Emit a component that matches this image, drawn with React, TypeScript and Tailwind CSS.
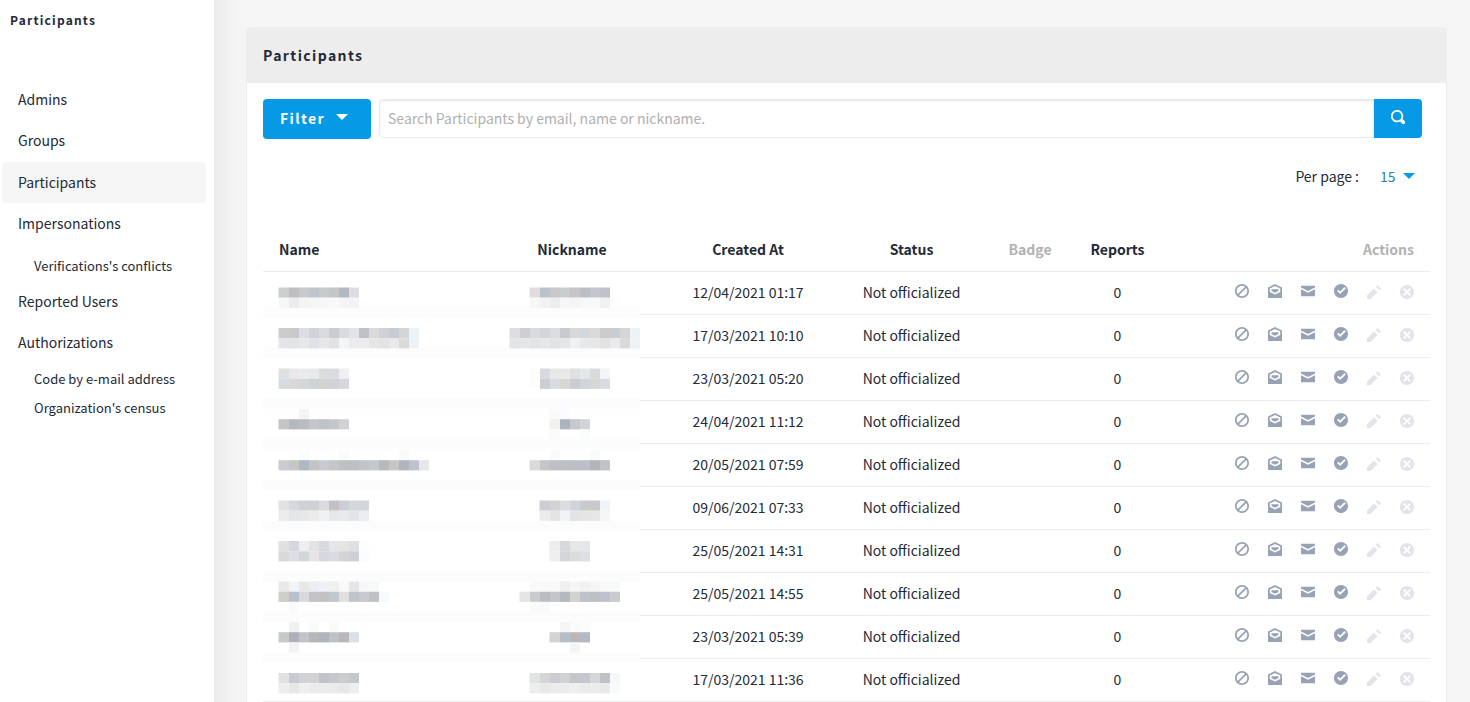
import React from "react";

const icons = {
  ban: "M4 0c-2.2 0-4 1.8-4 4s1.8 4 4 4 4-1.8 4-4-1.8-4-4-4zm0 1c.66 0 1.26.21 1.75.56l-4.19 4.19c-.35-.49-.56-1.09-.56-1.75 0-1.66 1.34-3 3-3zm2.44 1.25c.35.49.56 1.09.56 1.75 0 1.66-1.34 3-3 3-.66 0-1.26-.21-1.75-.56l4.19-4.19z",
  open: "M4 0l-4 2v6h8v-6l-4-2zm0 1.13l3 1.5v1.88l-3 1.5-3-1.5v-1.88l3-1.5zm-2 1.88v1l2 1 2-1v-1h-4z",
  envelope: "M0 1v1l4 2 4-2v-1h-8zm0 2v4h8v-4l-4 2-4-2z",
  check: "M4 0c-2.2 0-4 1.8-4 4s1.8 4 4 4 4-1.8 4-4-1.8-4-4-4zm2 1.78l.72.72-3.22 3.22-1.72-1.72.72-.72 1 1 2.5-2.5z",
  pencil: "M6 0l-1 1 2 2 1-1-2-2zm-2 2l-4 4v2h2l4-4-2-2z",
  remove: "M4 0c-2.2 0-4 1.8-4 4s1.8 4 4 4 4-1.8 4-4-1.8-4-4-4zm-1.5 1.78l1.5 1.5 1.5-1.5.72.72-1.5 1.5 1.5 1.5-.72.72-1.5-1.5-1.5 1.5-.72-.72 1.5-1.5-1.5-1.5.72-.72z",
  search: "M3.5 0c-1.93 0-3.5 1.57-3.5 3.5s1.57 3.5 3.5 3.5c.59 0 1.17-.14 1.66-.41a1 1 0 0 0 .13.13l1 1a1.02 1.02 0 1 0 1.44-1.44l-1-1a1 1 0 0 0-.16-.13c.27-.49.44-1.06.44-1.66 0-1.93-1.55-3.5-3.5-3.5zm0 1c1.39 0 2.5 1.11 2.5 2.5 0 .66-.24 1.27-.66 1.72l-.03.03a1 1 0 0 0-.13.13c-.44.4-1.04.63-1.69.63-1.39 0-2.5-1.11-2.5-2.5s1.11-2.5 2.5-2.5z",
};

function Icon({ name }: { name: keyof typeof icons }) {
  return (
    <svg viewBox="0 0 8 8" className="size-[14px] shrink-0 fill-current" aria-hidden="true">
      <path d={icons[name]} />
    </svg>
  );
}

function Caret() {
  return (
    <svg viewBox="0 0 12 6" className="h-[6px] w-[12px] shrink-0 fill-current" aria-hidden="true">
      <path d="M0 0h12l-6 6z" />
    </svg>
  );
}

// Each line is a list of hex colours, one per 10px block; "-" leaves a block empty.
type Mosaic = { x: number; lines: string[] };
type Row = { date: string; start: number; band: number; name: Mosaic; nick: Mosaic };

const rows: Row[] = [
  {
    date: "12/04/2021 01:17", start: 15.5, band: 35.5,
    name: { x: 16, lines: ["cccdce bebec0 c8c9cb c0c4cd c8cacc c4c6c8 b3b9c3 dcdde0", "f7f7f7 ececec f4f4f4 f5f7f6 f7f7f7 f9f9f9 f5f5f5 f3f3f3"] },
    nick: { x: 26, lines: ["e2dddd bcc1c9 c6c8cd cacdd0 c8c5c8 bbbfc5 c3c6cd c1c2c8", "f7f7f7 f2f2f2 ebedf0 f7f7f7 f5f5f5 f7f9f9 f8f8f8 f1f1f1 fdfdfd"] },
  },
  {
    date: "17/03/2021 10:10", start: 13, band: 32.5,
    name: { x: 16, lines: ["cccccf c9c9c9 dcdee3 d2d3d8 dadbdf cbccd0 dadbde e1e3e8 c0c1c6 dadada d0d1d4 c6cbd4 d5d5d5 edf2f7", "e3e5e8 e3e4e6 e7e7e7 dfe1e6 e7e7e9 e1e2e4 f3f4f6 ebebeb ececec e6e6e6 e2e3e5 e8e9ea dadadb eef2f5"] },
    nick: { x: 6, lines: ["dddee1 cfcfd2 dadbdf d4d5da dbdcdf c9cad0 d8d8da d3d8dc dadadb cccccc c9ced3 d5d5d5 edf2f7", "e3e4e6 e5e6e8 e1e3e7 e7e7e9 e1e2e4 e5e6e8 eef0f3 e8e8e8 e6e6e6 e0e2e3 e9eaeb d9d9da eef2f5"] },
  },
  {
    date: "23/03/2021 05:20", start: 10.5, band: 40.5,
    name: { x: 16, lines: ["dedfe1 e8e8e8 eaebec e8e9ea dcdcdd dadbe0 f0f0f0", "d8dbde dad8d9 d3d7dc ced4d6 d1d3d1 cfd3d8 d7d8de"] },
    nick: { x: 26, lines: ["fefdfb d8d9df e6e8ea e9e9e9 e0e0e2 e5e8eb d9dadd f4f5f7", "fefdfb cccdd2 d8dde0 d7d7d4 cbccd3 d0d4db d6d8d8 dadbe0"] },
  },
  {
    date: "24/04/2021 11:12", start: 8, band: 38,
    name: { x: 16, lines: ["- - f4f4f4 - - - -", "c4c5c5 b4b8bf b8bcc3 c4c6c9 bec2c9 c5c7cc d1d2d4"] },
    nick: { x: 46, lines: ["fafafa fafcff - -", "f3f1ed aeb4bf c6c8ca d0d3d9", "fafafa - - fafdfc"] },
  },
  {
    date: "20/05/2021 07:59", start: 6, band: 36,
    name: { x: 16, lines: ["- - fafcfc - - - fafafa - - - - - fafafa", "cacccf c6c6c5 b0b7c2 c3c4c5 c7cbd1 c4c5c5 bec1c4 bdc0c3 c1c4c8 c3c8cd b7b8bc c5c6c8 b3b4bb bec2cd e6e7ea"] },
    nick: { x: 26, lines: ["- - fafafa - - - fafafa", "dadada c4c6c8 bcc1c8 bcc0c5 bdbec1 bbc0c8 b3b4b9 bfc3c8"] },
  },
  {
    date: "09/06/2021 07:33", start: 13.5, band: 34,
    name: { x: 16, lines: ["e2e3e0 d5d8dd ced2d5 cfd0d4 dadbde c2c2c5 cacfd6 d4d7da d1d6d8", "ebecec e4e5e7 e6e7e9 ebebeb eef0f2 e8e8e8 e9eaeb e3e4e7 ebedf0"] },
    nick: { x: 36, lines: ["cdced3 d2d2d3 dcdddf cfd3da cacacc c9c9ca edf5fa", "ebeded e4e4e4 f1f3f6 e3e4e7 e5e5e6 e6e6e7 f5f6f8"] },
  },
  {
    date: "25/05/2021 14:31", start: 11, band: 42,
    name: { x: 16, lines: ["e0e1e2 d4d8dd eeeeef e4e2e4 d6dae0 e4e6e8 e5e5e2 dfe0e4 fbfefd", "d9d9db dddee3 d5d6d8 e7e4e6 d5d9df dadce1 d3d3d1 cdd0db fafcff"] },
    nick: { x: 46, lines: ["ededee d7d8da e6e7ea e5e7e9", "efeff0 d5d6d9 dcdcda dedfe5"] },
  },
  {
    date: "25/05/2021 14:55", start: 8.5, band: 39,
    name: { x: 16, lines: ["e9e7e8 f0f3f8 e7e7e7 ebedf2 eff1f4 f0f0f1 f9f9f9 e5e5e7 f7f7f7 f7f9f8", "cececa b9c0cc d8d9dc c2c3c6 c2c2c3 c4c7ca dfdfe0 c0c5cc c8cacf c0c1c3 f7fafd", "- fafafa"] },
    nick: { x: 16, lines: ["- fafafa f9f9f9 f9f9f9 f0f0f1 f7f5f4 eff1f3 f4f6f6 f9f9f9 f7f9fa", "e5e5e6 c8cacc bbbcc1 c4c5cb b4b9c0 d1d1ce bec2c9 bdc0c7 bfc2cc c8cbd0", "- fafafa fafafa"] },
  },
  {
    date: "23/03/2021 05:39", start: 6, band: 36.5,
    name: { x: 16, lines: ["- f1f1f2 - fafafa - fafafa", "c8caca adb0b8 c1c4c8 b6b7b9 b1b4bd bdc2c4 b8b8ba dae0e4", "- f3f3f3"] },
    nick: { x: 46, lines: ["- f5f5f5 fafafa fafcfb", "d5d3d4 b8bec7 bbb7b8 b4bac4", "- - f2f4f8"] },
  },
  {
    date: "17/03/2021 11:36", start: 14, band: 0,
    name: { x: 16, lines: ["e1e2e3 c9cacf d1d2d7 d2d2d2 c2c3c9 c5c8cb caccce c4c8ce", "eeeeef e6e7e9 efeff0 ebebeb ececed e9eaeb e7e7e8 edeef0"] },
    nick: { x: 26, lines: ["e2e3e5 d5d5d5 caccd1 cfd3d6 c5c6c8 c5c6ce d5d6d9 c0c1c4 f4f8fc", "ecedf0 e8e8e9 ebebec ececec eeeff0 eaebec ececed e9e9ea f8fbfe"] },
  },
];

function Redacted({ mosaic, start, band, label }: { mosaic: Mosaic; start: number; band: number; label: string }) {
  return (
    <svg role="img" aria-label={label} className="block h-[42px] w-full overflow-visible">
      {band > 0 && <rect x="0" y={band} width="100%" height="10" fill="#fcfcfc" />}
      {mosaic.lines.map((line, j) =>
        line.split(" ").map((c, i) =>
          c === "-" ? null : (
            <rect
              key={`${j}-${i}`}
              x={mosaic.x + i * 10 - (i === 0 ? 0.5 : 0)}
              y={start + j * 10.2}
              width={i === 0 ? 10.5 : 10}
              height="10.2"
              fill={`#${c}`}
            />
          ),
        ),
      )}
    </svg>
  );
}

const actions: { icon: keyof typeof icons; label: string; disabled?: boolean }[] = [
  { icon: "ban", label: "Block" },
  { icon: "open", label: "Show email" },
  { icon: "envelope", label: "Contact" },
  { icon: "check", label: "Officialize" },
  { icon: "pencil", label: "Edit", disabled: true },
  { icon: "remove", label: "Remove", disabled: true },
];

function NavItem({ children, active }: { children: string; active?: boolean }) {
  return (
    <li className={active ? "mt-px" : ""}>
      <a
        href="#"
        aria-current={active ? "page" : undefined}
        className={
          active
            ? "flex h-[41px] items-center rounded bg-[#f5f5f5] px-4 pb-[2px]"
            : "flex h-[41px] items-center rounded px-4 pb-[2px]"
        }
      >
        {children}
      </a>
    </li>
  );
}

function SubItem({ children }: { children: string }) {
  return (
    <li>
      <a href="#" className="flex h-[29px] items-center pb-[2px] pl-8 text-[13px]">
        {children}
      </a>
    </li>
  );
}

export default function App() {
  return (
    <div className="flex min-h-screen bg-[#f5f5f5] font-['Noto_Sans_CJK_SC',sans-serif] text-[14px] leading-[20px] text-[#242a37]">
      <aside className="w-[214px] shrink-0 bg-white">
        <h2 className="px-[10px] pt-[10px] text-[12px] font-bold tracking-widest">Participants</h2>
        <nav className="mt-[49px] pr-2 pl-[2px]">
          <ul>
            <NavItem>Admins</NavItem>
            <NavItem>Groups</NavItem>
            <NavItem active>Participants</NavItem>
            <NavItem>Impersonations</NavItem>
            <li className="pt-2">
              <ul>
                <SubItem>Verifications's conflicts</SubItem>
              </ul>
            </li>
            <NavItem>Reported Users</NavItem>
            <NavItem>Authorizations</NavItem>
            <li className="pt-[2px]">
              <ul>
                <SubItem>Code by e-mail address</SubItem>
                <SubItem>Organization's census</SubItem>
              </ul>
            </li>
          </ul>
        </nav>
      </aside>
      <div className="w-6 shrink-0 bg-linear-to-r from-[#ebebeb] to-[#f5f5f5]" />
      <main className="min-w-0 flex-1 pt-[27px] pr-[23px] pl-2">
        <section className="rounded-t border border-b-0 border-[#ededed] bg-white">
          <header className="flex h-[55px] items-center bg-[#ededed] px-4 pb-[2px]">
            <h1 className="text-[14px] font-bold tracking-widest">Participants</h1>
          </header>
          <div className="px-4 pt-4">
            <form className="flex items-start gap-2 pr-2" onSubmit={(e) => e.preventDefault()}>
              <button
                type="button"
                className="flex h-10 w-[108px] items-center gap-[11px] rounded bg-[#0599e6] pb-[2px] pl-[17px] font-bold tracking-widest text-white"
              >
                Filter
                <span className="pb-[2px]">
                  <Caret />
                </span>
              </button>
              <div className="flex h-[39px] min-w-0 flex-1">
                <input
                  type="search"
                  aria-label="Search Participants"
                  placeholder="Search Participants by email, name or nickname."
                  className="min-w-0 flex-1 rounded-l border border-[#ebebeb] bg-white px-2 pb-[2px] shadow-[inset_0_1px_2px_rgba(10,10,10,0.1)] outline-none placeholder:text-[#b0b0b0]"
                />
                <button
                  type="submit"
                  aria-label="Search"
                  className="flex w-12 items-center justify-center rounded-r bg-[#0599e6] pb-[4px] text-white"
                >
                  <Icon name="search" />
                </button>
              </div>
            </form>
            <div className="mt-[27px] flex items-center justify-end pr-[15px]">
              <label htmlFor="per-page">Per page :</label>
              <select id="per-page" defaultValue="15" className="ml-[21px] w-[23px] appearance-none bg-transparent text-[#2c85a8] outline-none">
                <option>15</option>
                <option>50</option>
                <option>100</option>
              </select>
              <span className="text-[#0599e6]">
                <Caret />
              </span>
            </div>
            <div className="pt-[42px] pr-px">
              <table className="w-full table-fixed border-collapse text-center">
                <colgroup>
                  <col className="w-[241px]" />
                  <col className="w-[136px]" />
                  <col className="w-[216px]" />
                  <col className="w-[111px]" />
                  <col className="w-[126px]" />
                  <col className="w-[49px]" />
                  <col className="w-[288px]" />
                </colgroup>
                <thead>
                  <tr className="h-[43px] border-b border-[#ededed] whitespace-nowrap">
                    <th className="px-4 text-left">Name</th>
                    <th>Nickname</th>
                    <th>Created At</th>
                    <th>Status</th>
                    <th className="text-[#b2b2b2]">Badge</th>
                    <th>
                      <div className="-mx-4 flex justify-center">Reports</div>
                    </th>
                    <th className="px-4 text-right text-[#b2b2b2]">Actions</th>
                  </tr>
                </thead>
                <tbody>
                  {rows.map((row, i) => {
                    const line = "border-b border-[#ededed] pb-[2px]";
                    const hidden = i === rows.length - 1 ? "border-b border-[#ededed]" : "border-b border-transparent";
                    return (
                      <tr key={i} className="h-[43px] whitespace-nowrap">
                        <td className={hidden}>
                          <Redacted mosaic={row.name} start={row.start} band={row.band} label="Hidden name" />
                        </td>
                        <td className={hidden}>
                          <Redacted mosaic={row.nick} start={row.start} band={row.band} label="Hidden nickname" />
                        </td>
                        <td className={line}>{row.date}</td>
                        <td className={line}>Not officialized</td>
                        <td className={line} />
                        <td className={line}>0</td>
                        <td className={line}>
                          <div className="flex justify-end gap-[19px] pr-4 pb-[2px]">
                            {actions.map((a) => (
                              <button
                                key={a.icon}
                                type="button"
                                aria-label={a.label}
                                disabled={a.disabled}
                                className="text-[#98a2b5] disabled:pt-[2px] disabled:text-[#e1e4ea]"
                              >
                                <Icon name={a.icon} />
                              </button>
                            ))}
                          </div>
                        </td>
                      </tr>
                    );
                  })}
                </tbody>
              </table>
            </div>
          </div>
        </section>
      </main>
    </div>
  );
}
